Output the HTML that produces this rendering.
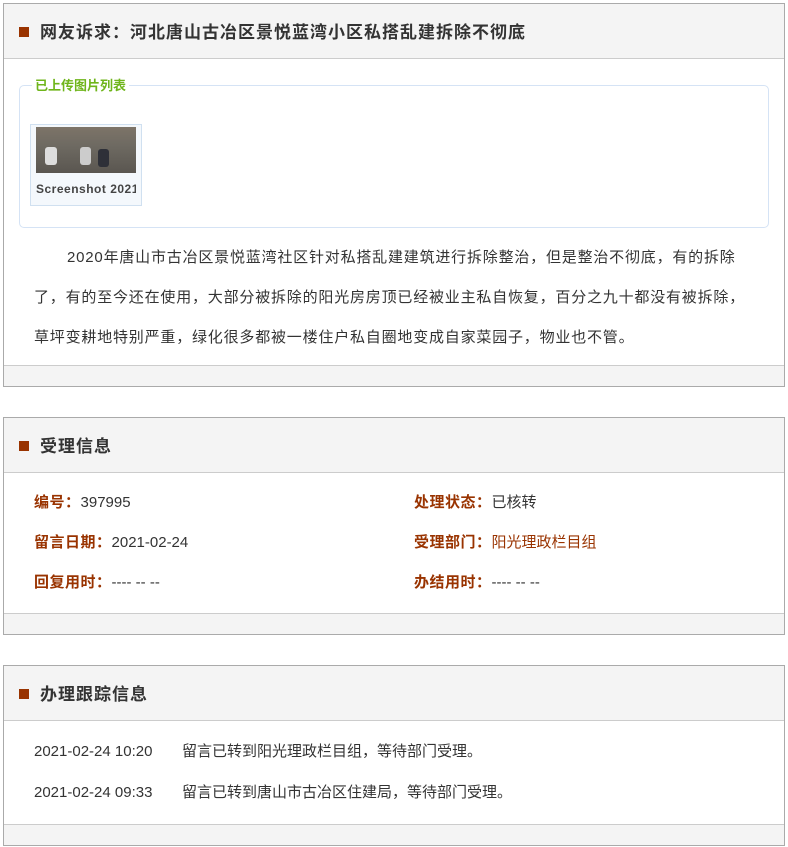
<!DOCTYPE html>
<html><head><meta charset="utf-8"><style>
*{margin:0;padding:0;box-sizing:border-box}
body{width:788px;height:847px;background:#fff;font-family:"Liberation Sans","Noto Sans CJK SC",sans-serif;color:#333;position:relative;overflow:hidden}
.p{position:absolute;left:3px;width:782px;border:1px solid #aaa;background:#fff}
.h{position:absolute;left:0;right:0;top:0;height:55px;background:#f4f4f4;border-bottom:1px solid #ccc}
.h i{position:absolute;left:15px;top:23px;width:10px;height:10px;background:#993300}
.h b{position:absolute;left:36px;top:16px;font-size:17px;line-height:26px;color:#333;letter-spacing:1px}
.f{position:absolute;left:0;right:0;bottom:0;height:21px;background:#f4f4f4;border-top:1px solid #ccc}
.t{position:absolute;font-size:15px;line-height:20px;white-space:nowrap}
.l{color:#993300;font-weight:bold;letter-spacing:0.5px}
</style></head><body>
<div class="p" style="top:3px;height:384px">
 <div class="h"><i></i><b>网友诉求：河北唐山古冶区景悦蓝湾小区私搭乱建拆除不彻底</b></div>
 <div style="position:absolute;left:15px;top:81px;width:750px;height:143px;border:1px solid #d5e3f5;border-radius:5px"></div>
 <div style="position:absolute;left:28px;top:73px;padding:0 3px;background:#fff;color:#6fb51b;font-weight:bold;font-size:13px;line-height:18px">已上传图片列表</div>
 <div style="position:absolute;left:26px;top:120px;width:112px;height:82px;border:1px solid #d0e0f0;background:#f4f8fc">
  <div style="position:absolute;left:5px;top:2px;width:100px;height:46px;background:linear-gradient(180deg,#7d7468 0%,#6e6a62 40%,#5a5650 100%)">
   <div style="position:absolute;left:9px;top:20px;width:12px;height:18px;background:#ddd;border-radius:3px"></div>
   <div style="position:absolute;left:44px;top:20px;width:11px;height:18px;background:#ccc;border-radius:3px"></div>
   <div style="position:absolute;left:62px;top:22px;width:11px;height:18px;background:#2e3038;border-radius:3px"></div>
  </div>
  <div style="position:absolute;left:5px;top:57px;font-size:12px;font-weight:bold;color:#444;white-space:nowrap;width:100px;overflow:hidden;letter-spacing:0.5px">Screenshot 2021</div>
 </div>
 <div class="t" style="left:30px;top:234px;line-height:40px;font-size:15px;letter-spacing:0.8px"><span style="display:inline-block;width:33px"></span>2020年唐山市古冶区景悦蓝湾社区针对私搭乱建建筑进行拆除整治，但是整治不彻底，有的拆除<br>了，有的至今还在使用，大部分被拆除的阳光房房顶已经被业主私自恢复，百分之九十都没有被拆除，<br>草坪变耕地特别严重，绿化很多都被一楼住户私自圈地变成自家菜园子，物业也不管。</div>
 <div class="f"></div>
</div>
<div class="p" style="top:417px;height:218px">
 <div class="h"><i></i><b>受理信息</b></div>
 <div class="t" style="left:30px;top:75px"><span class="l">编号：</span>397995</div>
 <div class="t" style="left:30px;top:115px"><span class="l">留言日期：</span>2021-02-24</div>
 <div class="t" style="left:30px;top:155px"><span class="l">回复用时：</span>---- -- --</div>
 <div class="t" style="left:410px;top:75px"><span class="l">处理状态：</span>已核转</div>
 <div class="t" style="left:410px;top:115px"><span class="l">受理部门：</span><span style="color:#993300">阳光理政栏目组</span></div>
 <div class="t" style="left:410px;top:155px"><span class="l">办结用时：</span>---- -- --</div>
 <div class="f"></div>
</div>
<div class="p" style="top:665px;height:181px">
 <div class="h"><i></i><b>办理跟踪信息</b></div>
 <div class="t" style="left:30px;top:76px">2021-02-24 10:20<span style="position:absolute;left:148px">留言已转到阳光理政栏目组，等待部门受理。</span></div>
 <div class="t" style="left:30px;top:117px">2021-02-24 09:33<span style="position:absolute;left:148px">留言已转到唐山市古冶区住建局，等待部门受理。</span></div>
 <div class="f"></div>
</div>
</body></html>
